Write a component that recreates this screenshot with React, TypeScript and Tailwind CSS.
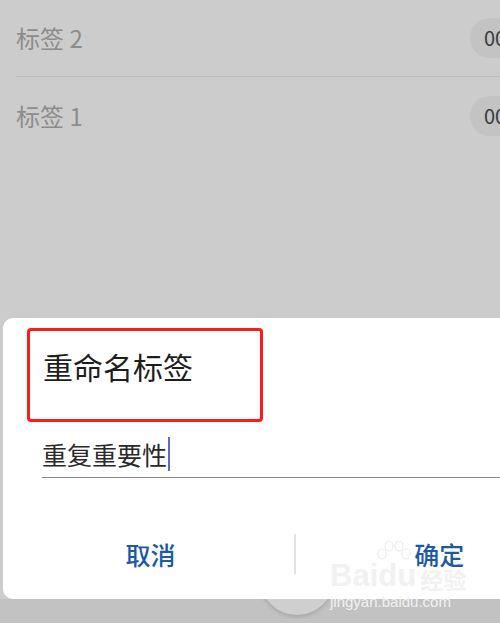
import React from "react";

const labels = ["标签 2", "标签 1"];

function Paw() {
  return (
    <svg width="36" height="26" viewBox="0 0 36 26" fill="none" stroke="#ececec" strokeWidth="1.2">
      <ellipse cx="6" cy="14" rx="4" ry="5" />
      <ellipse cx="13" cy="6" rx="4" ry="5" />
      <ellipse cx="23" cy="6" rx="4" ry="5" />
      <ellipse cx="30" cy="14" rx="4" ry="5" />
    </svg>
  );
}

export default function App() {
  return (
    <div
      className="relative h-[623px] w-[500px] overflow-hidden bg-[#cccccc]"
      style={{ fontFamily: '"Noto Sans CJK SC", "Noto Sans", sans-serif' }}
    >
      {/* background list */}
      <div className="flex flex-col pl-4">
        {labels.map((label, i) => (
          <div
            key={label}
            className={`flex h-[77px] items-center justify-between ${i === 0 ? "border-b-[1.5px] border-[#bdbdbd]" : ""}`}
          >
            <span className="text-[24px] leading-none text-[#8c8c8c]">{label}</span>
            <span className="-mr-10 flex h-[40px] w-[70px] items-center rounded-full bg-[#c3c3c3] pl-[14px] text-[20px] text-[#3a3a3a]">
              00
            </span>
          </div>
        ))}
      </div>

      {/* bottom strip + fab behind dialog */}
      <div className="absolute bottom-0 left-0 h-[24px] w-full bg-[#c2c2c2]" />
      <div className="absolute left-[260px] top-[541px] h-[74px] w-[74px] rounded-full bg-[#cfcfcf] shadow-[0_2px_4px_rgba(0,0,0,0.15)]" />

      {/* dialog */}
      <div className="absolute left-[3px] top-[318px] flex h-[281px] w-[589px] flex-col rounded-[10px] bg-white">
        <div className="pl-[40px] pt-[30px] text-[30px] leading-[36px] text-[#1e1e1e]">重命名标签</div>

        <div className="mx-[39px] mt-[53px] flex items-center border-b-[1.5px] border-[#8a8a8a] pb-[6px]">
          <span className="text-[25px] leading-[32px] text-[#2a2a2a]">重复重要性</span>
          <span className="ml-[1px] h-[34px] w-[2px] bg-[#5a6fc4]" />
        </div>

        <div className="mt-[56px] flex items-center">
          <div className="flex flex-1 justify-center pl-[4px] text-[25px] font-medium leading-none text-[#1b5aa6]">取消</div>
          <div className="h-[40px] w-[1.5px] bg-[#e3e3e3]" />
          <div className="flex flex-1 justify-center pr-[9px] text-[25px] font-medium leading-none text-[#1b5aa6]">确定</div>
        </div>

        {/* annotation box */}
        <div className="absolute left-[24px] top-[10px] h-[94px] w-[236px] rounded-[4px] border-[3px] border-[#ff1a1a]" />

        {/* watermark */}
        <div className="pointer-events-none absolute left-[327px] top-[222px] flex flex-col items-start">
          <div className="ml-[46px]">
            <Paw />
          </div>
          <div className="-mt-[6px] flex items-end gap-[4px] text-[31px] font-bold leading-none text-[#f1f1f1]">
            <span style={{ fontFamily: '"Liberation Sans", sans-serif' }}>Baidu</span>
            <span className="text-[23px]">经验</span>
          </div>
          <div className="mt-[3px] text-[15px] leading-none text-[#f1f1f1]" style={{ fontFamily: '"Liberation Sans", sans-serif' }}>
            jingyan.baidu.com
          </div>
        </div>
      </div>
    </div>
  );
}
